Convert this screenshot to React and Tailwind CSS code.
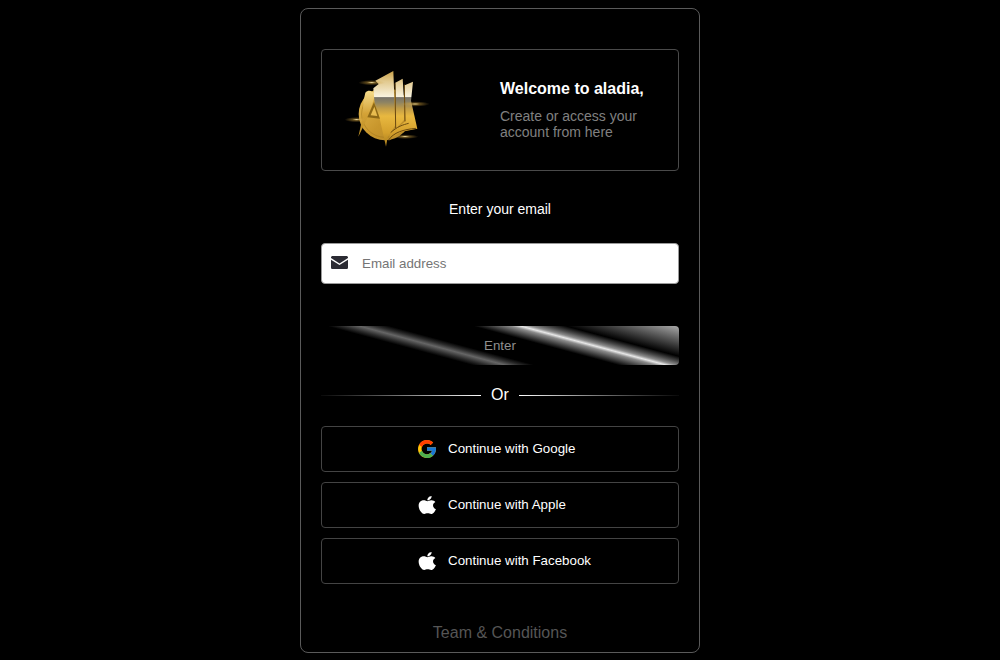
const Logo = () => (
  <svg width="100" height="95" viewBox="0 0 300 285">
    <defs>
      <linearGradient id="metal" gradientUnits="userSpaceOnUse" x1="0" y1="33" x2="0" y2="258">
        <stop offset="0" stopColor="#c9a048" />
        <stop offset="0.14" stopColor="#e2ca90" />
        <stop offset="0.34" stopColor="#f8f2de" />
        <stop offset="0.355" stopColor="#77736a" />
        <stop offset="0.42" stopColor="#8f8462" />
        <stop offset="0.5" stopColor="#c09c48" />
        <stop offset="0.6" stopColor="#e8b840" />
        <stop offset="0.82" stopColor="#d4a02c" />
        <stop offset="1" stopColor="#a87c1c" />
      </linearGradient>
      <linearGradient id="leg" x1="0" y1="0" x2="0" y2="1">
        <stop offset="0" stopColor="#f6dc8c" />
        <stop offset="0.5" stopColor="#d4a236" />
        <stop offset="1" stopColor="#b88c24" />
      </linearGradient>
      <linearGradient id="coin" x1="0" y1="0" x2="1" y2="1">
        <stop offset="0" stopColor="#e8bd50" />
        <stop offset="0.55" stopColor="#c8962c" />
        <stop offset="1" stopColor="#b08428" />
      </linearGradient>
      <radialGradient id="flare">
        <stop offset="0" stopColor="#fff0b8" stopOpacity="1" />
        <stop offset="0.35" stopColor="#d8a840" stopOpacity="0.45" />
        <stop offset="1" stopColor="#c89a3a" stopOpacity="0" />
      </radialGradient>
    </defs>
    <circle cx="135" cy="162" r="79" fill="url(#coin)" />
    <circle cx="135" cy="162" r="70" fill="none" stroke="#a87c20" strokeWidth="2" />
    <path d="M76 98 C84 90 96 90 106 104 L84 170 L55 230 L68 172 L70 125 Z" fill="url(#leg)" />
    <path d="M100 85 L116 72 L106 62 L160 33 L163 112 L166 196 L143 232 L138 260 L120 180 L104 130 Z" fill="url(#metal)" />
    <path d="M166 68 L188 56 L192 118 L192 180 L168 206 Z" fill="url(#metal)" />
    <path d="M194 76 L219 65 L213 122 L232 206 L182 216 L146 242 L150 218 L170 206 L196 184 Z" fill="url(#metal)" />
    <path d="M82 172 L102 126 L120 176 Z" fill="#8d6816" />
    <path d="M92 166 L103 140 L112 168 Z" fill="#e8bc50" />
    <path d="M165 70 L167 204 M193 74 L195 184 M146 240 C160 218 190 208 228 205 M152 218 C170 200 190 194 206 190" stroke="#6b4a10" strokeWidth="3" fill="none" />
    <ellipse cx="95" cy="68" rx="40" ry="8" fill="url(#flare)" />
    <ellipse cx="225" cy="132" rx="44" ry="8" fill="url(#flare)" />
    <ellipse cx="50" cy="179" rx="36" ry="8" fill="url(#flare)" />
    <ellipse cx="195" cy="230" rx="40" ry="7" fill="url(#flare)" />
  </svg>
)

const GoogleIcon = () => (
  <svg width="18" height="18" viewBox="4 4 40 40" className="shrink-0">
    <path fill="#FFC107" d="M43.6 20.1H42V20H24v8h11.3C33.7 32.7 29.2 36 24 36c-6.6 0-12-5.4-12-12s5.4-12 12-12c3.1 0 5.9 1.2 8 3l5.7-5.7C34 6.1 29.3 4 24 4 13 4 4 13 4 24s9 20 20 20 20-9 20-20c0-1.3-.1-2.6-.4-3.9z" />
    <path fill="#FF3D00" d="M6.3 14.7l6.6 4.8C14.7 15.1 19 12 24 12c3.1 0 5.9 1.2 8 3l5.7-5.7C34 6.1 29.3 4 24 4 16.3 4 9.7 8.3 6.3 14.7z" />
    <path fill="#4CAF50" d="M24 44c5.2 0 9.9-2 13.4-5.2l-6.2-5.2C29.2 35.1 26.7 36 24 36c-5.2 0-9.6-3.3-11.3-8l-6.5 5C9.5 39.6 16.2 44 24 44z" />
    <path fill="#1976D2" d="M43.6 20.1H42V20H24v8h11.3c-.8 2.2-2.2 4.2-4.1 5.6l6.2 5.2C37 39.2 44 34 44 24c0-1.3-.1-2.6-.4-3.9z" />
  </svg>
)

const AppleIcon = () => (
  <svg width="18" height="18" viewBox="-10 32 393 448" preserveAspectRatio="none" fill="#fff" className="shrink-0">
    <path d="M318.7 268.7c-.2-36.7 16.4-64.4 50-84.8-18.8-26.9-47.2-41.7-84.7-44.6-35.5-2.8-74.3 20.7-88.5 20.7-15 0-49.4-19.7-76.4-19.7C63.3 141.2 4 184.8 4 273.5q0 39.3 14.4 81.2c12.8 36.7 59 126.7 107.2 125.2 25.2-.6 43-17.9 75.8-17.9 31.8 0 48.3 17.9 76.4 17.9 48.6-.7 90.4-82.5 102.6-119.3-65.2-30.7-61.7-90-61.7-91.9zm-56.6-164.2c27.3-32.4 24.8-61.9 24-72.5-24.1 1.4-52 16.4-67.9 34.9-17.5 19.8-27.8 44.3-25.6 71.9 26.1 2 49.9-11.4 69.5-34.3z" />
  </svg>
)

const providers = [
  { label: "Continue with Google", icon: GoogleIcon },
  { label: "Continue with Apple", icon: AppleIcon },
  { label: "Continue with Facebook", icon: AppleIcon }
]

export default function App() {
  return (
    <div className="min-h-[660px] bg-black font-['Liberation_Sans',sans-serif] pt-2">
      <div className="w-[400px] h-[645px] mx-auto border border-[#5a5a5a] rounded-lg px-5 pt-10 flex flex-col">
        {/* Welcome header */}
        <div className="h-[122px] border border-[#4a4a4a] rounded grid grid-cols-2 shrink-0">
          <div className="pl-[18px] pt-[10px]">
            <Logo />
          </div>
          <div className="flex flex-col justify-center pb-[2px]">
            <h1 className="text-base font-bold leading-5 text-white">Welcome to aladia,</h1>
            <p className="text-sm leading-4 text-[#808080] mt-[9px] w-[150px]">Create or access your account from here</p>
          </div>
        </div>

        <p className="text-sm leading-5 text-white text-center mt-[28px]">Enter your email</p>

        {/* Email input */}
        <div className="h-[41px] mt-[24px] bg-white rounded border border-[#9a9a9a] flex items-center pl-[9px]">
          <svg width="17" height="13" viewBox="0 0 17 13" className="mb-[3px]">
            <path d="M1.6 0h13.8C16.3 0 17 .7 17 1.6v.5L8.5 7.6 0 2.1v-.5C0 .7.7 0 1.6 0z" fill="#2b2b33" />
            <path d="M0 3.7l8.5 5.4L17 3.7v7.7c0 .9-.7 1.6-1.6 1.6H1.6C.7 13 0 12.3 0 11.4z" fill="#2b2b33" />
          </svg>
          <span className="ml-[14px] text-[13.33px] text-[#757575]">Email address</span>
        </div>

        {/* Enter button */}
        <button className="h-[39px] mt-[42px] rounded flex items-center justify-center text-[13.33px] text-[#8f8f8f] bg-[linear-gradient(15deg,#000_30%,#2c2c2c_33%,#666_36.5%,#2c2c2c_39.5%,#000_42.5%,#000_59%,#4a4a4a_63%,#8c8c8c_66.5%,#e8e8e8_68.5%,#8c8c8c_70.5%,#4a4a4a_73.5%,#000_77.5%,#aaa_100%)]">
          Enter
        </button>

        {/* Divider */}
        <div className="flex items-center gap-[10px] mt-[20px] h-5">
          <div className="flex-1 h-px bg-gradient-to-r from-[#0a0a0a] to-white" />
          <span className="text-base text-white">Or</span>
          <div className="flex-1 h-px bg-gradient-to-l from-[#0a0a0a] to-white" />
        </div>

        {/* Social buttons */}
        <div className="flex flex-col gap-[10px] mt-[21px]">
          {providers.map((provider, index) => {
            const Icon = provider.icon
            return (
              <button
                key={index}
                className="h-[46px] border border-[#444] rounded flex items-center justify-center"
              >
                <span className="w-[164px] flex items-center gap-3 text-[13.33px] text-white whitespace-nowrap">
                  <Icon />
                  {provider.label}
                </span>
              </button>
            )
          })}
        </div>

        <p className="text-base leading-5 text-[#555] text-center mt-[39px]">Team & Conditions</p>
      </div>
    </div>
  )
}
